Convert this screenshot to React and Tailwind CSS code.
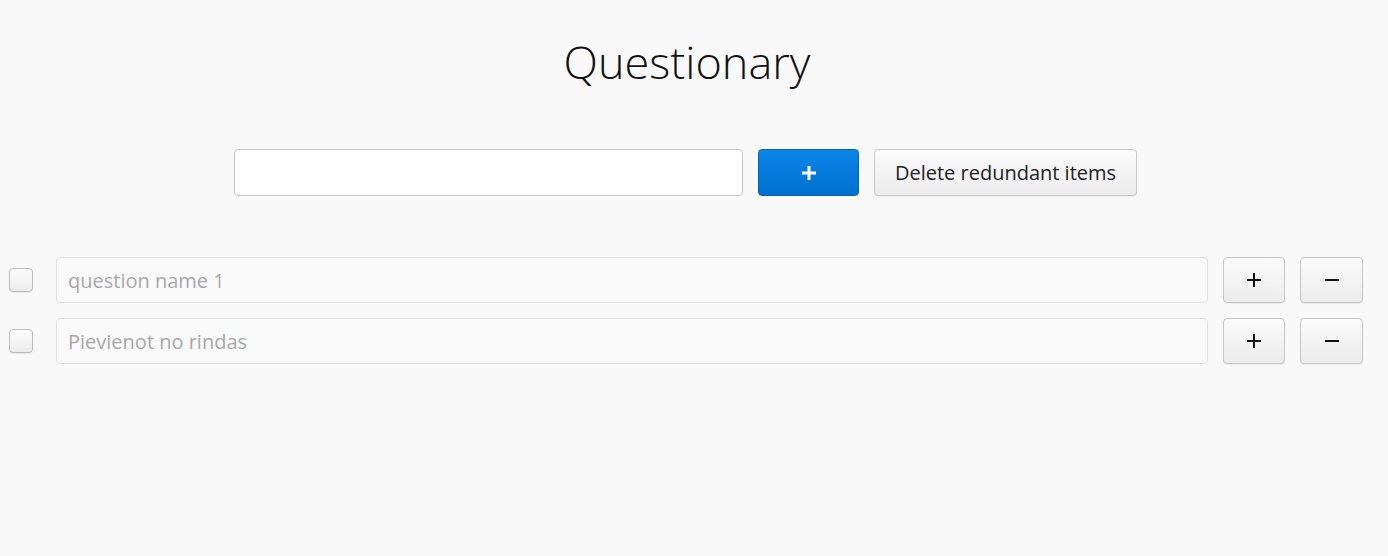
import React from 'react'

const rows = ['question name 1', 'Pievienot no rindas']

const grayBtn =
  'rounded-[4px] border border-[#c6c6c6] bg-gradient-to-b from-[#fbfbfb] to-[#ececec] text-[#222] shadow-[0_1px_1px_rgba(0,0,0,0.06)] flex items-center justify-center'

const App = () => {
  return (
    <div
      className="min-h-[556px] w-full bg-[#f9f9f9] text-[#222]"
      style={{ fontFamily: '"Open Sans", "Liberation Sans", sans-serif' }}
    >
      <div className="flex justify-center pt-[29px] pr-[14px]">
        <h1 className="text-[45px] font-light leading-[65px] text-[#111]">Questionary</h1>
      </div>

      <div className="mt-[55px] flex justify-center gap-[15px] pr-[17px]">
        <input
          type="text"
          className="h-[47px] w-[509px] rounded-[4px] border border-[#c4c4c4] bg-white px-3 text-[20px] outline-none"
        />
        <button className="flex h-[47px] w-[101px] items-center justify-center rounded-[4px] border border-[#0563b5] bg-gradient-to-b from-[#0b86e8] to-[#006fcf] text-white">
          <svg width="18" height="18" viewBox="0 0 18 18">
            <path d="M9 2v14M2 9h14" stroke="white" strokeWidth="3" />
          </svg>
        </button>
        <button className={`${grayBtn} h-[47px] w-[263px] text-[20px]`}>Delete redundant items</button>
      </div>

      <div className="mt-[61px] flex flex-col gap-[15px] pl-[9px] pr-[25px]">
        {rows.map((r, i) => (
          <div key={i} className="flex items-center">
            <div className="h-[24px] w-[24px] rounded-[4px] border border-[#bdbdbd] bg-gradient-to-b from-[#fdfdfd] to-[#ececec] shadow-[0_1px_1px_rgba(0,0,0,0.08)]" />
            <input
              type="text"
              placeholder={r}
              className="ml-[23px] h-[46px] flex-1 rounded-[4px] border border-[#e0e0e0] bg-[#fafafa] px-[11px] text-[20px] outline-none placeholder:text-[#a8a8a8]"
            />
            <button className={`${grayBtn} ml-[15px] h-[46px] w-[62px]`}>
              <svg width="16" height="16" viewBox="0 0 16 16">
                <path d="M8 1v14M1 8h14" stroke="#111" strokeWidth="2" />
              </svg>
            </button>
            <button className={`${grayBtn} ml-[15px] h-[46px] w-[63px]`}>
              <svg width="16" height="16" viewBox="0 0 16 16">
                <path d="M1 8h14" stroke="#111" strokeWidth="2" />
              </svg>
            </button>
          </div>
        ))}
      </div>
    </div>
  )
}

export default App
